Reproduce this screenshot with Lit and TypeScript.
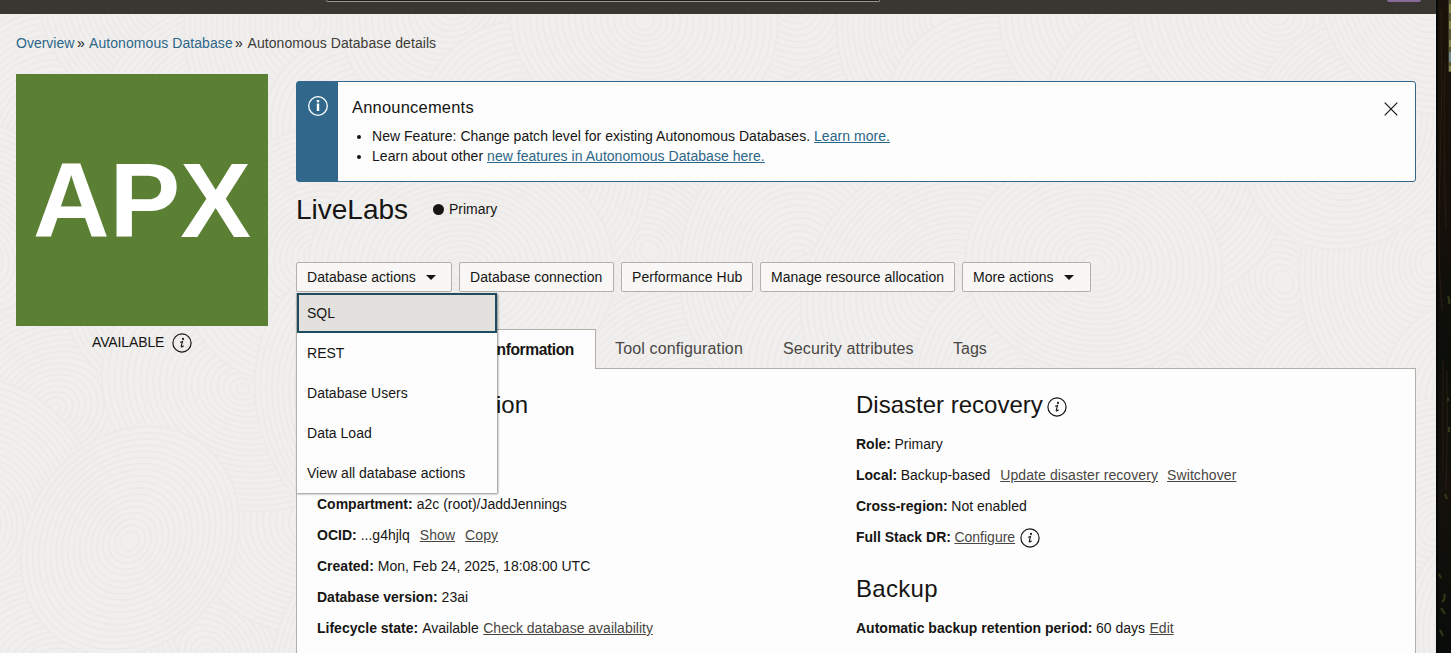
import { LitElement, html, css, svg } from "lit";
import { customElement, property } from "lit/decorators.js";

@customElement("info-icon")
class InfoIcon extends LitElement {
  static styles = css`
    :host { display: inline-flex; width: 20px; height: 20px; flex: none; }
  `;
  render() {
    return html`<svg width="20" height="20" viewBox="0 0 20 20" fill="none" stroke="#161513">
      <circle cx="10" cy="10" r="9.1" stroke-width="1.2" />
      <circle cx="11" cy="5.9" r="1.05" fill="#161513" stroke="none" />
      <path d="M8 9.3 Q9.4 9 10.5 8.5 L9.3 13 Q9 14.5 10.2 13.8 L11.6 12.7" stroke-width="1.1" />
    </svg>`;
  }
}

@customElement("action-button")
class ActionButton extends LitElement {
  @property({ type: Boolean }) menu = false;
  static styles = css`
    :host { display: block; }
    .btn {
      display: flex; align-items: center; box-sizing: border-box; width: 100%; height: 30px;
      padding: 0 10px; border: 1px solid #b3b0ac; border-radius: 2px; background: #f8f7f6;
      color: #161513; font: 14px/28px "Liberation Sans", Arial, sans-serif; letter-spacing: 0.04px; white-space: nowrap;
    }
    .caret { margin-left: 10px; border: 5px solid transparent; border-top-color: #161513; border-bottom: 0; }
  `;
  render() {
    return html`<div class="btn"><slot></slot>${this.menu ? html`<span class="caret"></span>` : ""}</div>`;
  }
}

const swirl = (cx: number, cy: number, r: number, tilt: number) => svg`
  <g transform="translate(${cx} ${cy}) rotate(${tilt})">
    ${Array.from({ length: Math.floor(r / 6.5) }, (_, i) => svg`<ellipse rx=${r - i * 6.5} ry=${(r - i * 6.5) * 0.84} />`)}
  </g>`;

const swirls = Array.from({ length: 60 }, (_, i) => {
  const n = (i * 37) % 60;
  const col = n % 10;
  const row = Math.floor(n / 10);
  return swirl(
    col * 160 + (row % 2) * 75 + ((n * 29) % 41) - 30,
    row * 130 + ((n * 17) % 37) - 10,
    120 + ((n * 13) % 38),
    (n * 47) % 180,
  );
});

@customElement("app-root")
class AppRoot extends LitElement {
  static styles = css`
    :host {
      display: block; position: relative; width: 1451px; height: 653px; overflow: hidden;
      background: #f0efee; color: #161513; font: 14px/20px "Liberation Sans", Arial, sans-serif; white-space: nowrap;
    }
    .texture { position: absolute; left: 0; top: 0; }
    .frame { position: relative; display: grid; grid-template-columns: 1436px 15px; height: 653px; }
    .top { height: 14px; background: #3a3631; display: flex; justify-content: space-between; }
    .search { margin-left: 326px; width: 552px; height: 1px; border: 1px solid #9a9693; border-top: 0; border-radius: 0 0 3px 3px; background: #201e1c; }
    .avatar { margin-right: 15px; width: 34px; height: 2px; background: #846a96; border-radius: 0 0 2px 2px; }
    .crumbs { display: flex; height: 20px; margin: 19px 0 0 16px; color: #3e3b38; letter-spacing: 0.07px; }
    .crumbs a { text-decoration: none; }
    .c1 { width: 61px; letter-spacing: 0; }
    .c2 { width: 146px; }
    .sep { width: 12px; color: #161513; }
    .here { margin-left: 0.5px; }
    a { color: #2c6687; }
    .cols { display: grid; grid-template-columns: 252px 1120px; column-gap: 28px; margin: 21px 0 0 16px; }
    .logo { height: 252px; background: #5b8034; color: #fff; font-weight: 700; font-size: 106px; line-height: 252px; text-align: center; }
    .state { display: flex; margin: 6px 0 0 76px; gap: 8px; }
    .state span { width: 72px; letter-spacing: -0.12px; }
    .state info-icon { margin-top: 1px; }
    .ann { box-sizing: border-box; height: 101px; margin-top: 7px; border: 1px solid #30678a; border-radius: 3px; background: #fdfdfd; display: flex; }
    .stripe { width: 41px; background: #30678a; display: flex; justify-content: center; padding-top: 14px; }
    .msg { flex: 1; padding: 14px 0 0 14px; letter-spacing: 0.035px; }
    .msg h3 { margin: 0; font-size: 16.5px; font-weight: 400; line-height: 22px; letter-spacing: 0.2px; }
    .msg ul { margin: 8px 0 0; padding-left: 20px; }
    .close { margin: 20px 17px 0 0; }
    .title { display: flex; height: 34px; margin-top: 10px; align-items: center; }
    .title h1 { margin: 2px 0 0; font-weight: 400; font-size: 28px; width: 137px; }
    .dot { width: 11px; height: 11px; border-radius: 50%; background: #161513; margin: 1px 5px 0 0; }
    .actions { display: flex; gap: 7px; margin-top: 36px; position: relative; }
    .b1 { width: 156px; } .b2 { width: 155px; } .b3 { width: 132px; } .b4 { width: 195px; } .b5 { width: 129px; }
    .menu { position: absolute; z-index: 2; left: 0; top: 31px; width: 200px; height: 200px; border-left: 1px solid #b3b0ac; background: #fdfdfd; box-shadow: 1px 1px 2px rgba(0,0,0,.45); }
    .item { box-sizing: border-box; height: 40px; padding-left: 10px; line-height: 40px; letter-spacing: 0.02px; }
    .item.on { border: 2px solid #1f4b61; background: #e3e1dd; padding-left: 8px; line-height: 36px; }
    .tabs { display: flex; height: 40px; margin: 37px 0 -1px; position: relative; font-size: 16px; line-height: 39px; color: #494643; letter-spacing: 0.14px; }
    .tab.on { box-sizing: border-box; width: 300px; padding-right: 21px; text-align: right; border: 1px solid #b3aea8; border-bottom: 0; background: #fdfdfd; color: #161513; font-size: 15.6px; font-weight: 700; line-height: 40px; letter-spacing: -0.4px; }
    .t2 { margin-left: 19px; width: 168px; } .t3 { width: 170px; }
    .tags { letter-spacing: 0; }
    .panel { box-sizing: border-box; height: 300px; border: 1px solid #b3aea8; background: #fdfdfd; display: grid; grid-template-columns: 539px 1fr; padding: 20px 0 0 20px; }
    h2 { margin: 0; height: 32px; font-size: 24px; font-weight: 400; line-height: 32px; display: flex; align-items: center; gap: 4px; }
    h2 info-icon { margin-top: 4px; }
    .info { width: 211px; justify-content: flex-end; }
    .row { display: flex; height: 31px; line-height: 31px; align-items: center; }
    .rows { padding-top: 8px; }
    .rows.left { padding-top: 68px; }
    .row b { margin-right: 4px; }
    .right .row b { margin-right: 3.5px; }
    .row a { color: #494643; text-decoration: underline; }
    .gap { margin-left: 10px; }
    .left .gap, .right .gap { letter-spacing: 0.09px; }
    .right .gap + .gap { margin-left: 9px; }
    .sm { margin-left: 4.5px; }
    info-icon.sm { margin-top: 1px; }
    .backup { margin-top: 20px; letter-spacing: 0.3px; }
    .photo { display: block; }
  `;
  render() {
    return html`
      <svg class="texture" width="1436" height="653" fill="#f0efee" stroke="#ebeae9" stroke-width="1.7">${swirls}</svg>
      <div class="frame">
        <main>
          <div class="top"><div class="search"></div><div class="avatar"></div></div>
          <nav class="crumbs"><a class="c1">Overview</a><span class="sep">»</span><a class="c2">Autonomous Database</a><span class="sep">»</span><span class="here">Autonomous Database details</span></nav>
          <div class="cols">
            <aside>
              <div class="logo">APX</div>
              <div class="state"><span>AVAILABLE</span><info-icon></info-icon></div>
            </aside>
            <section>
              <div class="ann">
                <div class="stripe"><svg width="20" height="20" fill="none" stroke="#fff"><circle cx="10" cy="10" r="9.3" stroke-width="1.3"/><path d="M10 4v2.2M10 7.5v7.5" stroke-width="2.4"/></svg></div>
                <div class="msg"><h3>Announcements</h3><ul><li>New Feature: Change patch level for existing Autonomous Databases. <a href="#">Learn more.</a></li><li>Learn about other <a href="#">new features in Autonomous Database here.</a></li></ul></div>
                <svg class="close" width="14" height="14" stroke="#161513" stroke-width="1.2"><path d="M.7.7l12.6 12.6M13.3.7L.7 13.3"/></svg>
              </div>
              <div class="title"><h1>LiveLabs</h1><span class="dot"></span><span>Primary</span></div>
              <div class="actions">
                <action-button class="b1" menu>Database actions</action-button>
                <action-button class="b2">Database connection</action-button>
                <action-button class="b3">Performance Hub</action-button>
                <action-button class="b4">Manage resource allocation</action-button>
                <action-button class="b5" menu>More actions</action-button>
                <div class="menu">${["SQL","REST","Database Users","Data Load","View all database actions"].map((t,i) => html`<div class="item ${i ? "" : "on"}">${t}</div>`)}</div>
              </div>
              <div class="tabs"><span class="tab on">information</span><span class="t2">Tool configuration</span><span class="t3">Security attributes</span><span class="tags">Tags</span></div>
              <div class="panel">
                <div>
                  <h2 class="info">information</h2>
                  <div class="rows left">
                    <div class="row"><b>Compartment:</b>a2c (root)/JaddJennings</div>
                    <div class="row"><b>OCID:</b>...g4hjlq<a class="gap">Show</a><a class="gap">Copy</a></div>
                    <div class="row"><b>Created:</b>Mon, Feb 24, 2025, 18:08:00 UTC</div>
                    <div class="row"><b>Database version:</b>23ai</div>
                    <div class="row"><b>Lifecycle state:</b>Available<a class="sm">Check database availability</a></div>
                  </div>
                </div>
                <div class="right">
                  <h2>Disaster recovery<info-icon></info-icon></h2>
                  <div class="rows">
                    <div class="row"><b>Role:</b>Primary</div>
                    <div class="row"><b>Local:</b>Backup-based<a class="gap">Update disaster recovery</a><a class="gap">Switchover</a></div>
                    <div class="row"><b>Cross-region:</b>Not enabled</div>
                    <div class="row"><b>Full Stack DR:</b><a>Configure</a><info-icon class="sm"></info-icon></div>
                  </div>
                  <h2 class="backup">Backup</h2>
                  <div class="rows"><div class="row"><b>Automatic backup retention period:</b>60 days<a class="sm">Edit</a></div></div>
                </div>
              </div>
            </section>
          </div>
        </main>
        <svg class="photo" width="15" height="653">
          <defs>
            <linearGradient id="bark" x1="0" x2="0" y1="0" y2="1">
              <stop offset="0" stop-color="#1a130b" /><stop offset=".3" stop-color="#17100a" />
              <stop offset=".55" stop-color="#0c0e0a" /><stop offset=".75" stop-color="#15110c" /><stop offset="1" stop-color="#080c09" />
            </linearGradient>
          </defs>
          <rect width="15" height="653" fill="url(#bark)" />
          <path d="M1 0v653" stroke="#060807" stroke-width="2" />
          <path d="M5 10q2 80-1 160t2 140M9 60q-2 90 1 170M7 360v110M11 370q1 60-1 120" stroke="#2a1d11" fill="none" />
          <path d="M14 0v72" stroke="#5c5937" stroke-width="3" />
          <path d="M14 4v9M14 21v8M14 40v7M14 66v5" stroke="#8a8650" stroke-width="2" />
          <path d="M14 52v10" stroke="#6f8c91" stroke-width="2" />
          <path d="M12 296q2 4 1 8M12 398v3M13 427v5M9 494l2 5M3 574l2 4M8 594q2 4-2 8M5 608l4 6M4 630l3 6" stroke="#343b18" stroke-width="2" fill="none" />
        </svg>
      </div>`;
  }
}
